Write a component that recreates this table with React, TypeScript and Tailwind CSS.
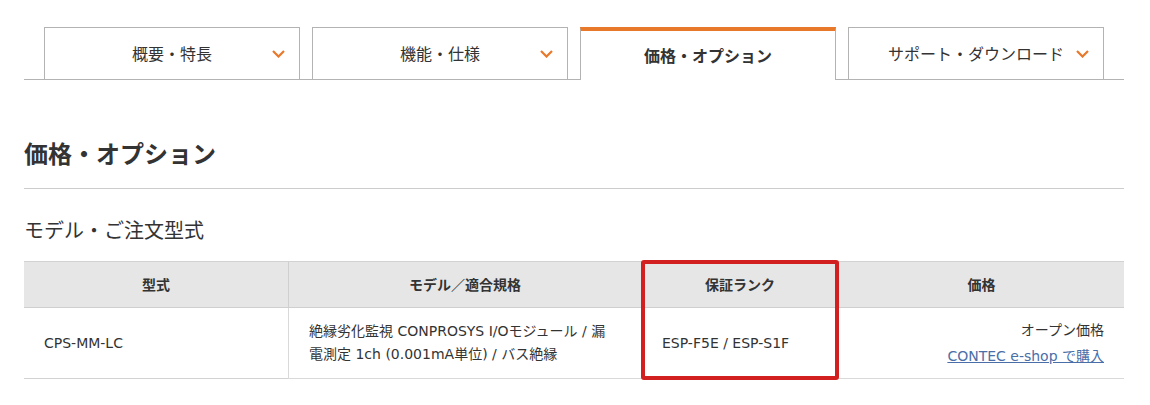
import React from "react";

const font = { fontFamily: "'Noto Sans', 'Noto Sans CJK JP', sans-serif" };
const bodyFont = { fontFamily: "'DejaVu Sans', 'Noto Sans CJK JP', sans-serif" };

function Chevron() {
  return (
    <svg width="13" height="8" viewBox="0 0 13 8" className="shrink-0">
      <polyline points="1,1 6.5,6.5 12,1" fill="none" stroke="#e8782a" strokeWidth="2.2" />
    </svg>
  );
}

function Tab({ label, active }: { label: string; active?: boolean }) {
  if (active) {
    return (
      <div className="flex-1 h-[53px] -mb-px bg-white border-t-4 border-t-[#e8782a] border-x border-x-[#b3b3b3] flex items-center justify-center">
        <span className="text-[16px] font-bold text-[#333] mt-[1px]">{label}</span>
      </div>
    );
  }
  return (
    <div className="flex-1 h-[52px] bg-white border-t border-x border-[#b3b3b3] relative flex items-center justify-center">
      <span className="text-[16px] text-[#333]">{label}</span>
      <div className="absolute right-[14px] top-[22px]">
        <Chevron />
      </div>
    </div>
  );
}

export default function App() {
  return (
    <div className="w-[1150px] h-[405px] bg-white overflow-hidden" style={font}>
      <div className="ml-[24px] w-[1100px] pt-[27px]">
        <div className="flex items-end gap-[12px] px-[20px] border-b border-[#b3b3b3]">
          <Tab label="概要・特長" />
          <Tab label="機能・仕様" />
          <Tab label="価格・オプション" active />
          <Tab label="サポート・ダウンロード" />
        </div>

        <div className="mt-[56px] pb-[16px] border-b border-[#cccccc]">
          <h2 className="text-[24px] leading-[36px] font-bold text-[#333]">価格・オプション</h2>
        </div>

        <h3 className="mt-[27px] text-[20px] leading-[30px] text-[#333]">モデル・ご注文型式</h3>

        <div className="relative mt-[15px]">
          <div className="grid grid-cols-[264px_353px_197px_286px] border-t border-[#d2d2d2] text-[14px] text-[#333]">
            <div className="h-[46px] bg-[#e6e6e6] border-b border-[#cfcfcf] flex items-center justify-center font-bold">型式</div>
            <div className="h-[46px] bg-[#e6e6e6] border-b border-l border-[#cfcfcf] flex items-center justify-center font-bold">モデル／適合規格</div>
            <div className="h-[46px] bg-[#e6e6e6] border-b border-l border-[#cfcfcf] flex items-center justify-center font-bold">保証ランク</div>
            <div className="h-[46px] bg-[#e6e6e6] border-b border-l border-[#cfcfcf] flex items-center justify-center font-bold">価格</div>

            <div className="h-[71px] border-b border-[#d2d2d2] flex items-center px-[20px]" style={bodyFont}>CPS-MM-LC</div>
            <div className="h-[71px] border-b border-l border-[#d9d9d9] flex items-center px-[20px] leading-[23px]" style={bodyFont}>
              <span>
                絶縁劣化監視 CONPROSYS I/Oモジュール / 漏<br />
                電測定 1ch (0.001mA単位) / バス絶縁
              </span>
            </div>
            <div className="h-[71px] border-b border-l border-[#d9d9d9] flex items-center px-[20px]" style={bodyFont}>ESP-F5E / ESP-S1F</div>
            <div className="h-[71px] border-b border-l border-[#d9d9d9] flex flex-col items-end justify-center px-[20px] gap-[4px] leading-[22px]" style={bodyFont}>
              <span>オープン価格</span>
              <a href="#" className="text-[#4a6ea8] underline">CONTEC e-shop で購入</a>
            </div>
          </div>
          <div className="absolute left-[617px] top-[-1px] w-[198px] h-[120px] border-[4px] border-[#d21f1f] rounded-[3px] pointer-events-none" />
        </div>
      </div>
    </div>
  );
}
